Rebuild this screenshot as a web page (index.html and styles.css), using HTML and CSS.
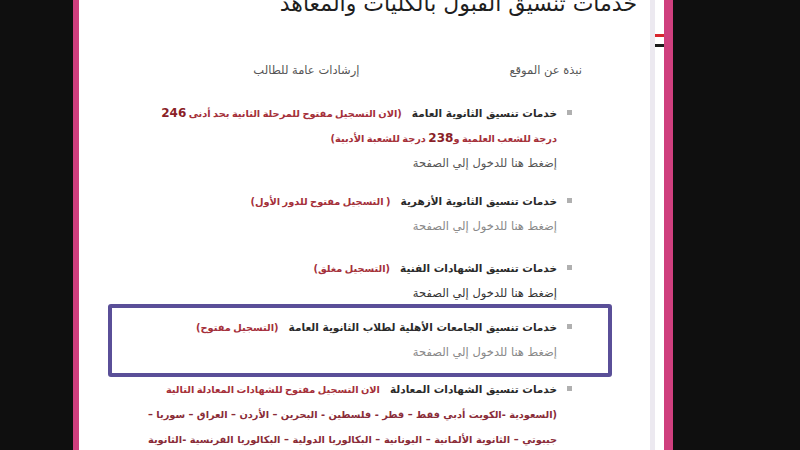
FILE: index.html
```html
<!DOCTYPE html>
<html lang="ar" dir="rtl">
<head>
<meta charset="utf-8">
<title>خدمات تنسيق القبول بالكليات والمعاهد</title>
<link rel="stylesheet" href="styles.css">
</head>
<body>
<div class="screen">
  <div class="side side-right"></div>
  <div class="stripe stripe-right"></div>
  <div class="page">
    <div class="flag"><span class="f-red"></span><span class="f-white"></span><span class="f-black"></span></div>
    <div class="rule"></div>
    <h1 class="title">خدمات تنسيق القبول بالكليات والمعاهد</h1>
    <nav class="nav">
      <a class="nav-link">نبذة عن الموقع</a>
      <a class="nav-link">إرشادات عامة للطالب</a>
    </nav>
    <ul class="list">
      <li class="item item-1">
        <span class="bullet"></span>
        <div class="body">
          <p class="head"><b class="name">خدمات تنسيق الثانوية العامة</b>&nbsp;&nbsp; <span class="note">(الان التسجيل مفتوح للمرحلة الثانية بحد أدنى <span class="num">246</span> درجة للشعب العلمية و<span class="num">238</span> درجة للشعبة الأدبية)</span></p>
          <p class="link">إضغط هنا للدخول إلي الصفحة</p>
        </div>
      </li>
      <li class="item item-2">
        <span class="bullet"></span>
        <div class="body">
          <p class="head"><b class="name">خدمات تنسيق الثانوية الأزهرية</b>&nbsp;&nbsp; <span class="note">( التسجيل مفتوح للدور الأول)</span></p>
          <p class="link light">إضغط هنا للدخول إلي الصفحة</p>
        </div>
      </li>
      <li class="item item-3">
        <span class="bullet"></span>
        <div class="body">
          <p class="head"><b class="name">خدمات تنسيق الشهادات الفنية</b>&nbsp;&nbsp; <span class="note">(التسجيل مغلق)</span></p>
          <p class="link dark">إضغط هنا للدخول إلي الصفحة</p>
        </div>
      </li>
      <li class="item boxed">
        <span class="bullet"></span>
        <div class="body">
          <p class="head"><b class="name">خدمات تنسيق الجامعات الأهلية لطلاب الثانوية العامة</b>&nbsp;&nbsp; <span class="note">(التسجيل مفتوح)</span></p>
          <p class="link light">إضغط هنا للدخول إلي الصفحة</p>
        </div>
      </li>
      <li class="item">
        <span class="bullet"></span>
        <div class="body">
          <p class="head justify"><b class="name">خدمات تنسيق الشهادات المعادلة</b>&nbsp;&nbsp; <span class="note">الان التسجيل مفتوح للشهادات المعادلة التالية</span><br><span class="note dim">(السعودية -الكويت أدبي فقط – قطر - فلسطين - البحرين – الأردن – العراق – سوريا – جيبوتي – الثانوية الألمانية – اليونانية – البكالوريا الدولية – البكالوريا الفرنسية -الثانوية الأمريكية)</span></p>
        </div>
      </li>
    </ul>
  </div>
  <div class="stripe stripe-left"></div>
  <div class="side side-left"></div>
</div>
</body>
</html>
```
FILE: styles.css
```css
html, body {
  margin: 0;
  padding: 0;
  background: #0f0f0f;
}
body {
  width: 800px;
  height: 450px;
  overflow: hidden;
  font-family: "DejaVu Sans", "Liberation Sans", sans-serif;
}
.screen {
  display: flex;
  flex-direction: row;
  width: 800px;
  height: 450px;
}
.side {
  background: #0f0f0f;
  flex: none;
}
.side-right { width: 127px; }
.side-left { width: 73px; }
.stripe {
  flex: none;
  background: #cf3f7e;
}
.stripe-right { width: 9px; }
.stripe-left { width: 6px; }
.page {
  flex: none;
  width: 585px;
  height: 450px;
  background: #fff;
  position: relative;
  overflow: hidden;
}
.rule {
  position: absolute;
  top: 0;
  right: 9px;
  width: 5px;
  height: 450px;
  background: #ece9f0;
}
.flag {
  position: absolute;
  top: 34px;
  right: 0;
  width: 14px;
  display: flex;
  flex-direction: column;
}
.flag span { display: block; }
.f-red { height: 3px; background: #d8262e; }
.f-white { height: 7px; background: #fff; }
.f-black { height: 3px; background: #1a1a1a; }
.title {
  margin: -11px 27px 0 0;
  font-size: 22px;
  line-height: 30px;
  font-weight: normal;
  color: #1e1e1e;
  white-space: nowrap;
}
.nav {
  display: flex;
  gap: 150px;
  margin: 43px 82px 0 0;
}
.nav-link {
  font-size: 11.5px;
  line-height: 16px;
  color: #555;
}
.list {
  list-style: none;
  margin: 23px 89px 0 0;
  padding: 0;
  width: 427px;
}
.item {
  display: flex;
  align-items: flex-start;
}
.item-1 { margin-bottom: 13px; }
.item-2 { margin-bottom: 17px; }
.bullet {
  flex: none;
  width: 5px;
  height: 5px;
  background: #b0b0b0;
  margin: 9px 3px 0 10px;
}
.body { flex: 1; }
.head, .link {
  margin: 0;
  font-size: 10.5px;
  line-height: 25px;
}
.justify { text-align: justify; }
.name { color: #2a2a2a; }
.note { color: #a5303a; font-size: 9.8px; font-weight: bold; word-spacing: -1px; }
.note.dim { color: #8a2c38; }
.num { color: #8a1f28; font-size: 12px; font-weight: bold; word-spacing: 0; }
.link { color: #555; font-size: 11.5px; }
.link.light { color: #888; }
.link.dark { color: #333; }
.boxed {
  border: 4px solid #5a4f98;
  border-radius: 3px;
  margin: -2px -37px 0 -40px;
  padding: 7px 33px 8px 36px;
}
```
